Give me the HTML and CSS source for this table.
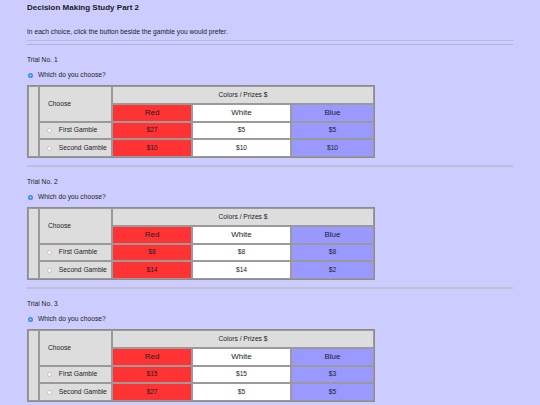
FILE: index.html
```html
<!DOCTYPE html>
<html lang="en">
<head>
    <meta charset="UTF-8">
    <meta name="viewport" content="width=device-width, initial-scale=1.0">
    <title>Decision Making Study Part 2</title>
    <link rel="stylesheet" href="styles.css">
</head>
<body>
    <div class="pagina">
        <h1>Decision Making Study Part 2</h1>
        <p class="instrucao">In each choice, click the button beside the gamble you would prefer.</p>
        <div class="regua-dupla"></div>

        <div class="trial">
            <p class="trial_titulo">Trial No. 1</p>
            <label class="trial_pergunta"><input type="radio" class="radio" checked> Which do you choose?</label>
            <table class="tabela">
                <colgroup><col class="c-vazio"><col class="c-escolha"><col class="c-red"><col class="c-white"><col class="c-blue"></colgroup>
                <tr>
                    <td class="cinza" rowspan="4"></td>
                    <td class="cinza escolha" rowspan="2">Choose</td>
                    <td class="cinza" colspan="3">Colors / Prizes $</td>
                </tr>
                <tr class="cores">
                    <td class="red">Red</td><td class="white">White</td><td class="blue">Blue</td>
                </tr>
                <tr>
                    <td class="cinza opcao"><input type="radio" class="radio" name="t1"> First Gamble</td>
                    <td class="red">$27</td><td class="white">$5</td><td class="blue">$5</td>
                </tr>
                <tr>
                    <td class="cinza opcao"><input type="radio" class="radio" name="t1"> Second Gamble</td>
                    <td class="red">$10</td><td class="white">$10</td><td class="blue">$10</td>
                </tr>
            </table>
            <div class="regua"></div>
        </div>

        <div class="trial">
            <p class="trial_titulo">Trial No. 2</p>
            <label class="trial_pergunta"><input type="radio" class="radio" checked> Which do you choose?</label>
            <table class="tabela">
                <colgroup><col class="c-vazio"><col class="c-escolha"><col class="c-red"><col class="c-white"><col class="c-blue"></colgroup>
                <tr>
                    <td class="cinza" rowspan="4"></td>
                    <td class="cinza escolha" rowspan="2">Choose</td>
                    <td class="cinza" colspan="3">Colors / Prizes $</td>
                </tr>
                <tr class="cores">
                    <td class="red">Red</td><td class="white">White</td><td class="blue">Blue</td>
                </tr>
                <tr>
                    <td class="cinza opcao"><input type="radio" class="radio" name="t2"> First Gamble</td>
                    <td class="red">$8</td><td class="white">$8</td><td class="blue">$8</td>
                </tr>
                <tr>
                    <td class="cinza opcao"><input type="radio" class="radio" name="t2"> Second Gamble</td>
                    <td class="red">$14</td><td class="white">$14</td><td class="blue">$2</td>
                </tr>
            </table>
            <div class="regua"></div>
        </div>

        <div class="trial">
            <p class="trial_titulo">Trial No. 3</p>
            <label class="trial_pergunta"><input type="radio" class="radio" checked> Which do you choose?</label>
            <table class="tabela">
                <colgroup><col class="c-vazio"><col class="c-escolha"><col class="c-red"><col class="c-white"><col class="c-blue"></colgroup>
                <tr>
                    <td class="cinza" rowspan="4"></td>
                    <td class="cinza escolha" rowspan="2">Choose</td>
                    <td class="cinza" colspan="3">Colors / Prizes $</td>
                </tr>
                <tr class="cores">
                    <td class="red">Red</td><td class="white">White</td><td class="blue">Blue</td>
                </tr>
                <tr>
                    <td class="cinza opcao"><input type="radio" class="radio" name="t3"> First Gamble</td>
                    <td class="red">$15</td><td class="white">$15</td><td class="blue">$3</td>
                </tr>
                <tr>
                    <td class="cinza opcao"><input type="radio" class="radio" name="t3"> Second Gamble</td>
                    <td class="red">$27</td><td class="white">$5</td><td class="blue">$5</td>
                </tr>
            </table>
            <div class="regua"></div>
        </div>
    </div>
</body>
</html>
```
FILE: styles.css
```css
*{border: 0;margin: 0;padding: 0;}
body{
    background-color: #ccccff;
    font-family: 'Liberation Sans', Arial, sans-serif;
    color: #222;
    overflow: hidden;
}
.pagina{
    width: 486px;
    padding: 3px 27px 0;
}
h1{
    font-size: 8px;
    line-height: 10px;
    font-weight: bold;
    color: #1a1a1a;
}
.instrucao{
    font-size: 6.7px;
    line-height: 8px;
    margin-top: 15px;
}
.regua-dupla{
    height: 3px;
    margin-top: 4px;
    border-top: 1px solid #bab8d8;
    border-bottom: 1px solid #b2b2d8;
}
.trial_titulo{
    font-size: 6.7px;
    line-height: 8px;
    margin-top: 11px;
}
.trial_pergunta{
    display: flex;
    align-items: center;
    gap: 5px;
    font-size: 6.7px;
    line-height: 8px;
    margin-top: 7px;
    padding-left: 1px;
}
.radio{
    appearance: none;
    width: 5px;
    height: 5px;
    border-radius: 50%;
    background-color: #fff;
    border: 0.5px solid #c4c4c4;
    flex-shrink: 0;
}
.radio:checked{
    border: 0;
    background-color: #3d8ef2;
    box-shadow: inset 0 0 0 1.7px #3d8ef2, inset 0 0 0 5px #cfe0fb;
}
.tabela{
    margin-top: 6px;
    table-layout: fixed;
    width: 348px;
    border-collapse: separate;
    border-spacing: 0;
    border: 1px solid #8c8c8c;
    font-size: 6.7px;
}
.tabela td{
    border: 1px solid #9a9a9a;
    height: 15.75px;
    box-sizing: content-box;
    text-align: center;
    vertical-align: middle;
    padding: 0;
    line-height: 8px;
}
.c-vazio{width: 11px;}
.c-escolha{width: 73px;}
.c-red{width: 80px;}
.c-white{width: 99px;}
.c-blue{width: 83px;}
.cinza{background-color: #dddddd;}
.red{background-color: #ff3333;}
.white{background-color: #ffffff;}
.blue{background-color: #9999ff;}
.cores td{font-size: 8px;}
.tabela td.escolha{
    text-align: left;
    padding-left: 8px;
}
.tabela td.opcao{
    text-align: left;
    padding-left: 7px;
}
.opcao .radio{
    vertical-align: -0.5px;
    margin-right: 5px;
}
.regua{
    margin-top: 7px;
    border-top: 2px solid #c0bfda;
}
```
